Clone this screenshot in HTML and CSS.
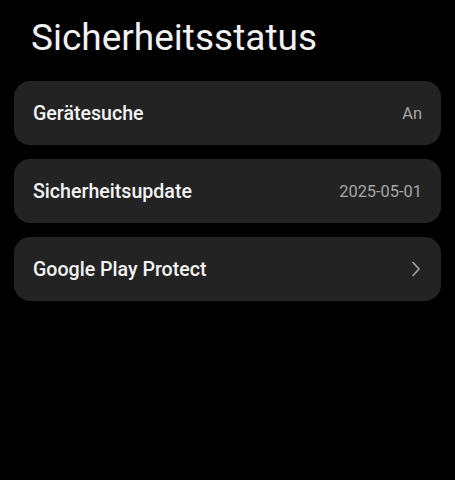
FILE: index.html
```html
<!DOCTYPE html>
<html lang="de">
<head>
<meta charset="utf-8">
<link rel="stylesheet" href="styles.css">
</head>
<body>
<main class="page">
  <h1 class="title">Sicherheitsstatus</h1>
  <div class="list">
    <div class="card">
      <span class="label">Gerätesuche</span>
      <span class="value">An</span>
    </div>
    <div class="card">
      <span class="label">Sicherheitsupdate</span>
      <span class="value">2025-05-01</span>
    </div>
    <div class="card">
      <span class="label">Google Play Protect</span>
      <svg class="chev" width="10" height="16" viewBox="0 0 10 16"><path d="M2 1.5 L8 8 L2 14.5" fill="none" stroke="#a8a8a8" stroke-width="1.6" stroke-linecap="round" stroke-linejoin="round"/></svg>
    </div>
  </div>
</main>
</body>
</html>
```

FILE: styles.css
```css
html, body {
  margin: 0;
  padding: 0;
  background: #000;
  width: 455px;
  height: 480px;
  overflow: hidden;
  font-family: Roboto, "Noto Sans", sans-serif;
}
.page {
  padding: 14px 14px 0 14px;
}
.title {
  margin: 0 0 0 17px;
  font-weight: 400;
  font-size: 37px;
  line-height: 48px;
  color: #f2f2f2;
  height: 67px;
}
.list {
  display: flex;
  flex-direction: column;
  gap: 14px;
}
.card {
  height: 64px;
  background: #232323;
  border-radius: 16px;
  display: flex;
  align-items: center;
  justify-content: space-between;
  padding: 0 19px 0 19px;
}
.label {
  color: #f4f4f4;
  font-size: 19.6px;
  font-weight: 500;
}
.value {
  color: #a6a6a6;
  font-size: 16.4px;
}
.chev {
  margin-right: 1px;
}
```
